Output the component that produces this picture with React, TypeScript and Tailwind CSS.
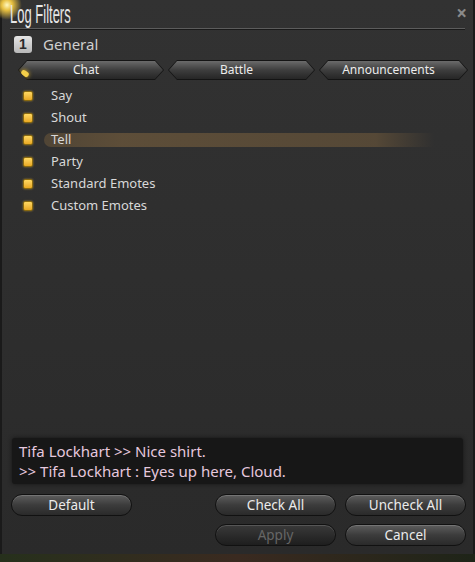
import React from 'react';

const filters = ['Say', 'Shout', 'Tell', 'Party', 'Standard Emotes', 'Custom Emotes'];

const font = { fontFamily: '"Noto Sans", "Open Sans", sans-serif' };

const Tab: React.FC<{ label: string; active?: boolean; width: string }> = ({ label, active, width }) => (
  <div className={`relative h-[20px] ${width} bg-[#141414] p-px [clip-path:polygon(9px_0,calc(100%_-_9px)_0,100%_50%,calc(100%_-_9px)_100%,9px_100%,0_50%)]`}>
    <div className="flex h-full w-full items-center justify-center bg-gradient-to-b from-[#6b6b6b] via-[#3e3e3e] to-[#262626] pr-[10px] text-[12px] text-[#ececec] [clip-path:polygon(8px_0,calc(100%_-_8px)_0,100%_50%,calc(100%_-_8px)_100%,8px_100%,0_50%)]">
      {label}
    </div>
    {active && (
      <div className="absolute left-[3px] top-[11px] h-[5px] w-[8px] rotate-[35deg] rounded-sm bg-[#f5d04a] shadow-[0_0_4px_#f5c020]" />
    )}
  </div>
);

const PillButton: React.FC<{ label: string; disabled?: boolean }> = ({ label, disabled }) => (
  <div
    className={`flex h-[22px] w-[121px] items-center justify-center rounded-full border border-[#111] text-[13.5px] shadow-[inset_0_1px_0_rgba(255,255,255,0.15)] ${
      disabled
        ? 'bg-gradient-to-b from-[#3a3a3a] to-[#1e1e1e] text-[#666]'
        : 'bg-gradient-to-b from-[#5e5e5e] via-[#3c3c3c] to-[#2a2a2a] text-[#ebebeb]'
    }`}
  >
    {label}
  </div>
);

const App: React.FC = () => {
  return (
    <div className="flex h-[562px] w-[475px] flex-col overflow-hidden bg-[#1c1f18]" style={font}>
      <div className="relative flex h-[554px] flex-col border-x-[2px] border-[#1a1a1a] bg-gradient-to-b from-[#323232] to-[#2a2a2a]">
        {/* sparkle */}
        <div className="pointer-events-none absolute -left-[10px] -top-[10px] h-[30px] w-[30px] rounded-full bg-[radial-gradient(circle,#fff8c0_0%,#e8c040_25%,rgba(200,160,40,0)_70%)]" />

        {/* title */}
        <div className="flex h-[28px] items-end justify-between pl-[8px] pr-[6px]">
          <span
            className="inline-block origin-left scale-x-[0.52] text-[25px] leading-[27px] text-[#e6e6e6]"
            style={{ fontFamily: '"Liberation Sans", sans-serif' }}
          >
            Log Filters
          </span>
          <span className="mb-[5px] text-[19px] font-bold leading-[20px] text-[#8a8a8a]">×</span>
        </div>
        <div className="mx-[8px] h-px bg-[#5c5c5c] shadow-[0_1px_0_#1a1a1a]" />

        {/* channel */}
        <div className="mt-[6px] flex h-[18px] items-center gap-[11px] pl-[12px]">
          <div className="flex h-[17px] w-[18px] items-center justify-center rounded-[3px] bg-gradient-to-b from-[#e6e6e6] to-[#b8b8b8] text-[14px] font-bold text-[#2a2a2a]" style={{ fontFamily: '"Liberation Sans", sans-serif' }}>
            1
          </div>
          <span className="text-[15px] text-[#cfcfcf]">General</span>
        </div>

        {/* tabs */}
        <div className="mt-[7px] flex gap-[4px] pl-[16px]">
          <Tab label="Chat" active width="w-[146px]" />
          <Tab label="Battle" width="w-[147px]" />
          <Tab label="Announcements" width="w-[149px]" />
        </div>

        {/* filters */}
        <div className="mt-[5px] flex flex-col">
          {filters.map((f) => (
            <div key={f} className="relative flex h-[22px] items-center">
              {f === 'Tell' && (
                <div className="absolute left-[42px] top-[4px] h-[14px] w-[390px] rounded-l-full bg-[linear-gradient(to_right,rgba(120,95,60,0.45)_0%,rgba(112,90,60,0.7)_20%,rgba(105,85,58,0.65)_85%,rgba(90,75,55,0)_100%)]" />
              )}
              <div className="relative ml-[21px] h-[10px] w-[10px] rounded-[2px] border border-[#8a6a10] bg-gradient-to-b from-[#ffd860] to-[#e8a820] shadow-[0_0_2px_rgba(255,200,60,0.6)]" />
              <span className="relative ml-[18px] text-[13px] text-[#d8d8d8]">{f}</span>
            </div>
          ))}
        </div>

        <div className="flex-1" />

        {/* message preview */}
        <div className="mx-[10px] flex h-[46px] flex-col justify-center rounded-[3px] bg-[#171717] px-[7px] text-[15px] leading-[20px] text-[#e6c8de] shadow-[0_0_4px_#151515]">
          <div>Tifa Lockhart &gt;&gt; Nice shirt.</div>
          <div>&gt;&gt; Tifa Lockhart : Eyes up here, Cloud.</div>
        </div>

        {/* buttons */}
        <div className="mt-[10px] flex items-center pl-[9px] pr-[7px]">
          <PillButton label="Default" />
          <div className="flex-1" />
          <div className="flex gap-[9px]">
            <PillButton label="Check All" />
            <PillButton label="Uncheck All" />
          </div>
        </div>
        <div className="mt-[8px] flex justify-end gap-[9px] pr-[7px]">
          <PillButton label="Apply" disabled />
          <PillButton label="Cancel" />
        </div>
        <div className="h-[8px]" />
      </div>
      <div className="flex-1 bg-gradient-to-r from-[#26301c] via-[#3a2a20] to-[#1e2418]" />
    </div>
  );
};

export default App;
